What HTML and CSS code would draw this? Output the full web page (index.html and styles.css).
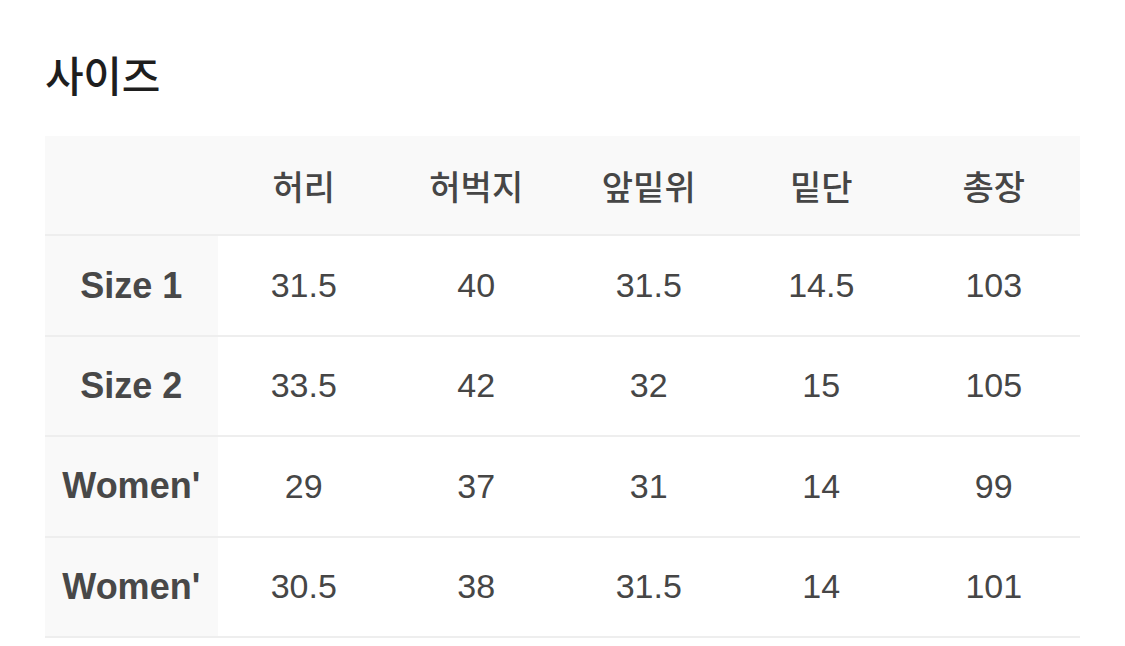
FILE: index.html
```html
<!DOCTYPE html>
<html lang="ko">
<head>
<meta charset="utf-8">
<title>사이즈</title>
<link rel="stylesheet" href="styles.css">
</head>
<body>
<main class="page">
  <h2 class="title">사이즈</h2>
  <table class="size-table">
    <thead>
      <tr>
        <th class="corner"></th>
        <th>허리</th>
        <th>허벅지</th>
        <th>앞밑위</th>
        <th>밑단</th>
        <th>총장</th>
      </tr>
    </thead>
    <tbody>
      <tr><th class="label">Size 1</th><td>31.5</td><td>40</td><td>31.5</td><td>14.5</td><td>103</td></tr>
      <tr><th class="label">Size 2</th><td>33.5</td><td>42</td><td>32</td><td>15</td><td>105</td></tr>
      <tr><th class="label">Women'</th><td>29</td><td>37</td><td>31</td><td>14</td><td>99</td></tr>
      <tr><th class="label">Women'</th><td>30.5</td><td>38</td><td>31.5</td><td>14</td><td>101</td></tr>
    </tbody>
  </table>
</main>
</body>
</html>
```
FILE: styles.css
```css
html, body {
  margin: 0;
  padding: 0;
  background: #ffffff;
}
body {
  font-family: "Liberation Sans", "Noto Sans CJK KR", sans-serif;
  color: #444444;
}
.page {
  padding: 50px 45px 0 45px;
}
.title {
  margin: 0;
  font-family: "Noto Sans CJK KR", sans-serif;
  font-size: 42px;
  font-weight: 500;
  line-height: 48px;
  color: #1e1e1e;
  letter-spacing: -0.3px;
}
.size-table {
  margin-top: 38px;
  width: 1035px;
  table-layout: fixed;
  border-collapse: collapse;
  border-spacing: 0;
}
.size-table th,
.size-table td {
  height: 98.4px;
  padding: 0;
  text-align: center;
  vertical-align: middle;
  border-bottom: 2px solid #eeeeee;
  font-size: 34px;
  color: #464646;
}
.size-table thead th {
  background: #f9f9f9;
  font-family: "Noto Sans CJK KR", sans-serif;
  font-weight: 500;
  font-size: 34px;
}
.size-table .label {
  background: #f9f9f9;
  font-weight: 700;
  font-size: 36px;
  color: #484848;
}
.size-table td {
  background: #ffffff;
}
```
